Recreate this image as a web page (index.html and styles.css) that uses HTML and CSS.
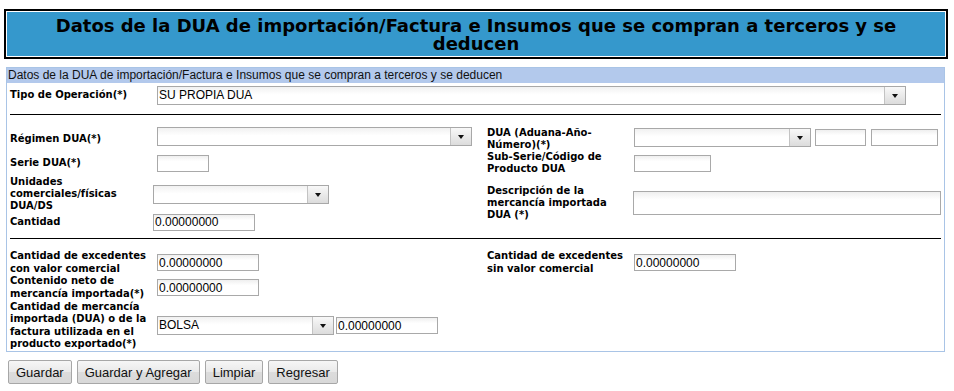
FILE: index.html
```html
<!DOCTYPE html>
<html lang="es">
<head>
    <meta charset="UTF-8">
    <title>Datos de la DUA de importación</title>
    <link rel="stylesheet" href="styles.css">
</head>
<body>
<div class="titulo">
    <div class="titulo-in">Datos de la DUA de importación/Factura e Insumos que se compran a terceros y se deducen</div>
</div>

<div class="panel">
    <div class="panel-head">Datos de la DUA de importación/Factura e Insumos que se compran a terceros y se deducen</div>

    <div class="blk blk-tipo">
        <label class="lbl c1">Tipo de Operación(*)</label>
        <div class="fld c2-4">
            <span class="sel w-tipo"><span class="val">SU PROPIA DUA</span><span class="btn"></span></span>
        </div>
    </div>

    <div class="sep sep-1"></div>

    <div class="blk blk-dua">
        <label class="lbl c1">Régimen DUA(*)</label>
        <div class="fld c2 top">
            <span class="sel w-reg"><span class="val"></span><span class="btn"></span></span>
        </div>
        <label class="lbl c3">DUA (Aduana-Año-Número)(*)</label>
        <div class="fld c4 top top-1">
            <span class="sel w-adu"><span class="val"></span><span class="btn"></span></span>
            <input type="text" class="txt w-anio">
            <input type="text" class="txt w-num">
        </div>

        <label class="lbl c1">Serie DUA(*)</label>
        <div class="fld c2"><input type="text" class="txt w-serie"></div>
        <label class="lbl c3">Sub-Serie/Código de Producto DUA</label>
        <div class="fld c4"><input type="text" class="txt w-sub"></div>

        <label class="lbl c1 lbl-uni">Unidades comerciales/físicas DUA/DS</label>
        <div class="fld c2 shift">
            <span class="sel w-uni"><span class="val"></span><span class="btn"></span></span>
        </div>
        <label class="lbl c3 r34">Descripción de la mercancía importada DUA (*)</label>
        <div class="fld c4 r34 shift-1"><input type="text" class="txt w-desc"></div>

        <label class="lbl c1">Cantidad</label>
        <div class="fld c2 shift"><input type="text" class="txt w-cant" value="0.00000000"></div>
    </div>

    <div class="sep sep-2"></div>

    <div class="blk blk-exc">
        <label class="lbl c1">Cantidad de excedentes con valor comercial</label>
        <div class="fld c2"><input type="text" class="txt w-cant" value="0.00000000"></div>
        <label class="lbl c3">Cantidad de excedentes sin valor comercial</label>
        <div class="fld c4"><input type="text" class="txt w-cant" value="0.00000000"></div>

        <label class="lbl c1">Contenido neto de mercancía importada(*)</label>
        <div class="fld c2"><input type="text" class="txt w-cant" value="0.00000000"></div>

        <label class="lbl c1">Cantidad de mercancía importada (DUA) o de la factura utilizada en el producto exportado(*)</label>
        <div class="fld c2-4">
            <span class="sel w-unimed"><span class="val">BOLSA</span><span class="btn"></span></span>
            <input type="text" class="txt w-cant" value="0.00000000">
        </div>
    </div>
</div>

<div class="botones">
    <button type="button" class="boton">Guardar</button>
    <button type="button" class="boton">Guardar y Agregar</button>
    <button type="button" class="boton">Limpiar</button>
    <button type="button" class="boton">Regresar</button>
</div>
</body>
</html>
```

FILE: styles.css
```css
body {
    margin: 0;
    font-family: "DejaVu Sans", Verdana, sans-serif;
    background-color: #ffffff;
    color: #000;
}

*,
*::before,
*::after {
    box-sizing: border-box;
}

/* Caja de titulo */
.titulo {
    margin: 9px 6px 0 4px;
    border: 2px solid #000;
    padding: 1px;
    background-color: #fff;
}

.titulo-in {
    background-color: #3598cc;
    height: 44px;
    padding: 5px 24px 0 24px;
    text-align: center;
    font-weight: bold;
    font-size: 18px;
    line-height: 18px;
}

/* Panel del formulario */
.panel {
    margin: 8px 9px 0 6px;
    border: 1px solid #a9c4e6;
    padding: 0 1px 0 3px;
}

.panel-head {
    margin: 0 -1px 0 -3px;
    padding-left: 1px;
    height: 15px;
    line-height: 15px;
    background-color: #b3c9ec;
    font-family: "Liberation Sans", Arial, sans-serif;
    font-size: 12px;
    color: #111;
}

.blk {
    display: grid;
    grid-template-columns: 147px 330px 147px 1fr;
    align-items: center;
}

.blk-tipo {
    grid-template-rows: 25px;
}

.blk-dua {
    grid-template-rows: 24px 24px 38px 18px;
}

.blk-exc {
    grid-template-rows: 25px 25px 51px;
}

.sep {
    border-top: 1px solid #000;
    margin-right: 2px;
}

.sep-1 {
    margin-top: 6px;
    margin-bottom: 12px;
}

.sep-2 {
    margin-top: 7px;
    margin-bottom: 11px;
}

.c1 { grid-column: 1; }
.c2 { grid-column: 2; }
.c3 { grid-column: 3; }
.c4 { grid-column: 4; }
.c2-4 { grid-column: 2 / 5; }
.r34 { grid-row: 3 / span 2; }

.lbl {
    font-weight: bold;
    font-size: 10px;
    line-height: 12.3px;
    padding-right: 4px;
}

.fld {
    display: flex;
    align-items: center;
}

.fld.top {
    align-self: start;
}

.fld.top-1 {
    padding-top: 1px;
}

.fld.shift {
    margin-left: -4px;
}

.fld.shift-1 {
    margin-left: -1px;
}

/* Combos */
.sel {
    display: inline-flex;
    height: 19px;
    border: 1px solid #a8a8a8;
    background: linear-gradient(#f1f1f1, #ffffff 45%);
    font-family: "Liberation Sans", Arial, sans-serif;
    font-size: 12px;
}

.sel .val {
    flex: 1;
    padding-left: 1px;
    line-height: 17px;
    white-space: nowrap;
    overflow: hidden;
}

.sel .btn {
    width: 21px;
    border-left: 1px solid #c3c3c3;
    background: linear-gradient(#f8f8f8, #dcdcdc);
    display: flex;
    align-items: center;
    justify-content: center;
}

.sel .btn::after {
    content: "";
    border-left: 3.5px solid transparent;
    border-right: 3.5px solid transparent;
    border-top: 4px solid #111;
    margin-top: 1px;
}

/* Cajas de texto */
.txt {
    height: 17px;
    padding: 0 1px;
    border: 1px solid #a9a9a9;
    background: linear-gradient(#efefef, #ffffff 35%);
    font-family: "Liberation Sans", Arial, sans-serif;
    font-size: 12px;
    color: #000;
}

.w-tipo { width: 749px; }
.w-reg { width: 315px; }
.w-adu { width: 177px; }
.w-anio { width: 51px; margin-left: 4px; }
.w-num { width: 67px; margin-left: 5px; }
.w-serie { width: 52px; }
.w-sub { width: 77px; }
.w-uni { width: 176px; }
.w-cant { width: 102px; }
.w-desc { width: 308px; height: 24px; }
.w-unimed { width: 177px; margin-right: 2px; }

/* Botones */
.botones {
    display: flex;
    gap: 5px;
    margin: 8px 0 0 8px;
}

.boton {
    height: 24px;
    padding: 0 7px;
    border: 1px solid #a7a7a7;
    border-radius: 2px;
    background: linear-gradient(#f6f6f6, #e9e9e9 50%, #dcdcdc 51%, #d8d8d8);
    font-family: "Liberation Sans", Arial, sans-serif;
    font-size: 13px;
    color: #111;
}
```
